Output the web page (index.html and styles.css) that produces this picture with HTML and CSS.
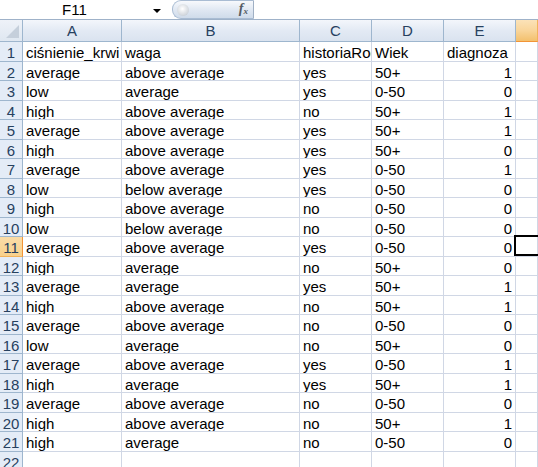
FILE: index.html
```html
<!DOCTYPE html>
<html>
<head>
<meta charset="utf-8">
<link rel="stylesheet" href="styles.css">
</head>
<body>
<div class="fbar">
  <div class="namebox"><span class="name">F11</span><span class="dd"></span></div>
  <div class="pill"><span class="knob"></span><span class="fx">f<sub>x</sub></span></div>
  <div class="formula"></div>
</div>
<div class="g">
  <div class="c h corner"><span class="tri"></span></div><div class="c h">A</div><div class="c h">B</div><div class="c h">C</div><div class="c h">D</div><div class="c h">E</div><div class="c h selh"></div>

  <div class="c r">1</div><div class="c">ciśnienie_krwi</div><div class="c">waga</div><div class="c">historiaRodzinna</div><div class="c">Wiek</div><div class="c">diagnoza</div><div class="c"></div>
  <div class="c r">2</div><div class="c">average</div><div class="c">above average</div><div class="c">yes</div><div class="c">50+</div><div class="c n">1</div><div class="c"></div>
  <div class="c r">3</div><div class="c">low</div><div class="c">average</div><div class="c">yes</div><div class="c">0-50</div><div class="c n">0</div><div class="c"></div>
  <div class="c r">4</div><div class="c">high</div><div class="c">above average</div><div class="c">no</div><div class="c">50+</div><div class="c n">1</div><div class="c"></div>
  <div class="c r">5</div><div class="c">average</div><div class="c">above average</div><div class="c">yes</div><div class="c">50+</div><div class="c n">1</div><div class="c"></div>
  <div class="c r">6</div><div class="c">high</div><div class="c">above average</div><div class="c">yes</div><div class="c">50+</div><div class="c n">0</div><div class="c"></div>
  <div class="c r">7</div><div class="c">average</div><div class="c">above average</div><div class="c">yes</div><div class="c">0-50</div><div class="c n">1</div><div class="c"></div>
  <div class="c r">8</div><div class="c">low</div><div class="c">below average</div><div class="c">yes</div><div class="c">0-50</div><div class="c n">0</div><div class="c"></div>
  <div class="c r">9</div><div class="c">high</div><div class="c">above average</div><div class="c">no</div><div class="c">0-50</div><div class="c n">0</div><div class="c"></div>
  <div class="c r">10</div><div class="c">low</div><div class="c">below average</div><div class="c">no</div><div class="c">0-50</div><div class="c n">0</div><div class="c"></div>
  <div class="c r selr">11</div><div class="c">average</div><div class="c">above average</div><div class="c">yes</div><div class="c">0-50</div><div class="c n">0</div><div class="c act"></div>
  <div class="c r">12</div><div class="c">high</div><div class="c">average</div><div class="c">no</div><div class="c">50+</div><div class="c n">0</div><div class="c"></div>
  <div class="c r">13</div><div class="c">average</div><div class="c">average</div><div class="c">yes</div><div class="c">50+</div><div class="c n">1</div><div class="c"></div>
  <div class="c r">14</div><div class="c">high</div><div class="c">above average</div><div class="c">no</div><div class="c">50+</div><div class="c n">1</div><div class="c"></div>
  <div class="c r">15</div><div class="c">average</div><div class="c">above average</div><div class="c">no</div><div class="c">0-50</div><div class="c n">0</div><div class="c"></div>
  <div class="c r">16</div><div class="c">low</div><div class="c">average</div><div class="c">no</div><div class="c">50+</div><div class="c n">0</div><div class="c"></div>
  <div class="c r">17</div><div class="c">average</div><div class="c">above average</div><div class="c">yes</div><div class="c">0-50</div><div class="c n">1</div><div class="c"></div>
  <div class="c r">18</div><div class="c">high</div><div class="c">average</div><div class="c">yes</div><div class="c">50+</div><div class="c n">1</div><div class="c"></div>
  <div class="c r">19</div><div class="c">average</div><div class="c">above average</div><div class="c">no</div><div class="c">0-50</div><div class="c n">0</div><div class="c"></div>
  <div class="c r">20</div><div class="c">high</div><div class="c">above average</div><div class="c">no</div><div class="c">50+</div><div class="c n">1</div><div class="c"></div>
  <div class="c r">21</div><div class="c">high</div><div class="c">average</div><div class="c">no</div><div class="c">0-50</div><div class="c n">0</div><div class="c"></div>
  <div class="c r">22</div><div class="c"></div><div class="c"></div><div class="c"></div><div class="c"></div><div class="c"></div><div class="c"></div>
</div>
</body>
</html>
```
FILE: styles.css
```css
html, body {
  margin: 0;
  padding: 0;
  width: 538px;
  height: 467px;
  overflow: hidden;
  background: #ffffff;
  font-family: "Liberation Sans", Arial, sans-serif;
}

.fbar {
  display: flex;
  height: 19px;
  border-bottom: 1px solid #9fb2c9;
  background: #ffffff;
}

.namebox {
  width: 170px;
  display: flex;
  align-items: center;
  position: relative;
}

.name {
  margin-left: 62px;
  font-size: 15px;
  color: #000;
  line-height: 19px;
}

.dd {
  margin-left: 66px;
  width: 0;
  height: 0;
  border-left: 4px solid transparent;
  border-right: 4px solid transparent;
  border-top: 4px solid #000;
  margin-top: 2px;
}

.pill {
  width: 82px;
  height: 19px;
  margin-left: 2px;
  box-sizing: border-box;
  border: 1px solid #a9bcd3;
  border-right: 1px solid #a0b0c4;
  border-radius: 9px 0 0 9px;
  background: linear-gradient(#f7f9fc, #dfe7f2 55%, #cfdbea);
  display: flex;
  align-items: center;
  position: relative;
}

.knob {
  width: 12px;
  height: 12px;
  border-radius: 50%;
  margin-left: 4px;
  background: radial-gradient(circle at 45% 40%, #ffffff, #d3d8de 65%, #aeb6bf);
}

.fx {
  margin-left: auto;
  margin-right: 5px;
  font-family: "Liberation Serif", "Times New Roman", serif;
  font-style: italic;
  font-weight: bold;
  font-size: 14px;
  color: #555b63;
  line-height: 14px;
}

.fx sub {
  font-size: 9px;
  vertical-align: baseline;
  position: relative;
  top: 1px;
}

.formula {
  flex: 1;
  background: #ffffff;
}

.g {
  display: grid;
  grid-template-columns: 23px 99px 178px 72px 72px 72px 22px;
  grid-template-rows: 22px;
  grid-auto-rows: 20px 19px;
}

.c {
  box-sizing: border-box;
  border-right: 1px solid #d0d7e5;
  border-bottom: 1px solid #d0d7e5;
  font-size: 15px;
  color: #000;
  white-space: nowrap;
  overflow: hidden;
  padding-left: 3px;
  padding-top: 2px;
  display: flex;
  align-items: center;
  line-height: 17px;
  position: relative;
}

.h {
  background: linear-gradient(#f3f6fb, #e3eaf4 50%, #dae3ef);
  border-right: 1px solid #9eb6ce;
  border-bottom: 1px solid #9eb6ce;
  color: #27415f;
  justify-content: center;
  padding-left: 0;
  padding-top: 0;
}

.corner {
  background: linear-gradient(#eef2f8, #dfe7f1);
}

.tri {
  position: absolute;
  right: 3px;
  bottom: 3px;
  width: 0;
  height: 0;
  border-left: 13px solid transparent;
  border-bottom: 13px solid #c5cfdb;
}

.selh {
  background: linear-gradient(#fbe2b8, #f9d59a 50%, #f3c06d);
  border-bottom: 1px solid #f29436;
  border-right: 1px solid #f2b25a;
}

.r {
  background: #e4ecf7;
  border-right: 1px solid #9eb6ce;
  border-bottom: 1px solid #9eb6ce;
  color: #27415f;
  justify-content: center;
  padding-left: 0;
}

.selr {
  background: linear-gradient(#fbdca8, #f8d18c);
  border-right: 1px solid #f29436;
  border-bottom: 1px solid #f2b25a;
}

.n {
  justify-content: flex-end;
  padding-left: 0;
  padding-right: 3px;
}

.act {
  overflow: visible;
}

.act::after {
  content: "";
  position: absolute;
  left: -2px;
  top: -2px;
  width: 40px;
  height: 21px;
  border: 2px solid #000;
  box-sizing: border-box;
}
```
